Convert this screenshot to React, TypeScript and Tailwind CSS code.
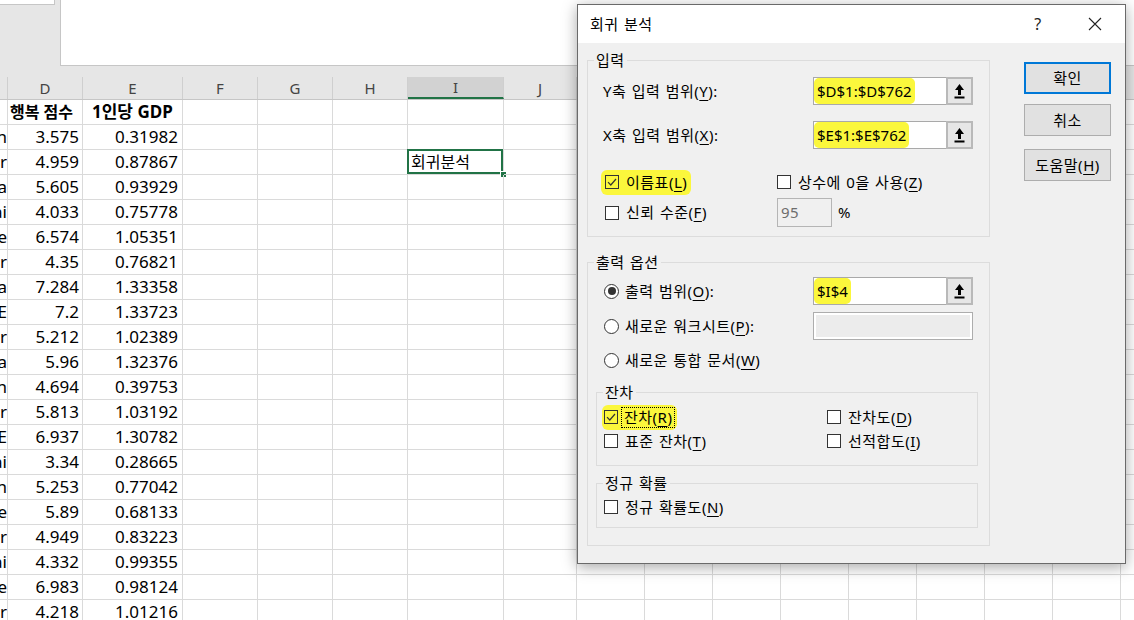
import React from 'react'

const KR = "font-['Noto_Sans','Noto_Sans_CJK_KR',sans-serif]"

const rows = [
  { c: 'n', d: '3.575', e: '0.31982' },
  { c: 'ar', d: '4.959', e: '0.87867' },
  { c: 'Ea', d: '5.605', e: '0.93929' },
  { c: 'ai', d: '4.033', e: '0.75778' },
  { c: 'ne', d: '6.574', e: '1.05351' },
  { c: 'ar', d: '4.35', e: '0.76821' },
  { c: 'a', d: '7.284', e: '1.33358' },
  { c: 'E', d: '7.2', e: '1.33723' },
  { c: 'ar', d: '5.212', e: '1.02389' },
  { c: 'Ea', d: '5.96', e: '1.32376' },
  { c: 'n', d: '4.694', e: '0.39753' },
  { c: 'ar', d: '5.813', e: '1.03192' },
  { c: 'E', d: '6.937', e: '1.30782' },
  { c: 'ai', d: '3.34', e: '0.28665' },
  { c: 'n', d: '5.253', e: '0.77042' },
  { c: 'ne', d: '5.89', e: '0.68133' },
  { c: 'ar', d: '4.949', e: '0.83223' },
  { c: 'ai', d: '4.332', e: '0.99355' },
  { c: 'ne', d: '6.983', e: '0.98124' },
  { c: 'ar', d: '4.218', e: '1.01216' },
]

const cols = [
  { key: 'C', label: '', w: 'w-[8px]' },
  { key: 'D', label: 'D', w: 'w-[75px]' },
  { key: 'E', label: 'E', w: 'w-[100px]' },
  { key: 'F', label: 'F', w: 'w-[75px]' },
  { key: 'G', label: 'G', w: 'w-[75px]' },
  { key: 'H', label: 'H', w: 'w-[75px]' },
  { key: 'I', label: 'I', w: 'w-[96px]' },
  { key: 'J', label: 'J', w: 'w-[73px]' },
  { key: 'K', label: 'K', w: 'w-[68px]' },
  { key: 'L', label: 'L', w: 'w-[68px]' },
  { key: 'M', label: 'M', w: 'w-[68px]' },
  { key: 'N', label: 'N', w: 'w-[68px]' },
  { key: 'O', label: 'O', w: 'w-[68px]' },
  { key: 'P', label: 'P', w: 'w-[68px]' },
  { key: 'Q', label: 'Q', w: 'w-[68px]' },
  { key: 'R', label: 'R', w: 'w-[68px]' },
  { key: 'S', label: '', w: 'w-[68px]' },
]

function Mn({ children }: { children: React.ReactNode }) {
  return <span className="underline decoration-1 underline-offset-[3px]">{children}</span>
}

function Check({ checked, clear }: { checked?: boolean; clear?: boolean }) {
  return (
    <span className={`w-[14px] h-[14px] border border-[#333] flex items-center justify-center shrink-0 ${clear ? 'bg-transparent' : 'bg-white'}`}>
      {checked && (
        <svg width="12" height="12" viewBox="0 0 12 12">
          <path d="M2 6.2 L4.8 9 L10 3" fill="none" stroke="#333" strokeWidth="1.2" />
        </svg>
      )}
    </span>
  )
}

function Radio({ on }: { on?: boolean }) {
  return (
    <span className="w-[15px] h-[15px] rounded-full border border-[#333] bg-white flex items-center justify-center shrink-0">
      {on && <span className="w-[8px] h-[8px] rounded-full bg-[#333]" />}
    </span>
  )
}

function RefButton() {
  return (
    <div className="w-[27px] h-[28px] border-2 border-[#b9b9b9] bg-[#e6e6e6] flex items-center justify-center shrink-0">
      <svg width="11" height="17" viewBox="0 0 11 17">
        <path d="M5.5 1 L10 7 H7 V12 H4 V7 H1 Z" fill="#000" />
        <rect x="0.5" y="13.5" width="10" height="2" fill="#000" />
      </svg>
    </div>
  )
}

function RangeInput({ value }: { value: string }) {
  return (
    <div className="flex">
      <div className="w-[133px] h-[28px] bg-white border border-[#a9a9a9] border-r-0 flex items-stretch tracking-normal">
        <span className="bg-[#fbf73c] rounded-[5px] px-[3px] flex items-center leading-none">{value}</span>
      </div>
      <RefButton />
    </div>
  )
}

function Spreadsheet() {
  return (
    <div className={`flex flex-col ${KR}`}>
      {/* formula bar area */}
      <div className="flex h-[66px]">
        <div className="w-[60px] bg-[#e6e6e6]">
          <div className="w-[55px] h-[5px] bg-white border-r border-b border-[#c6c6c6]" />
        </div>
        <div className="flex-1 bg-white border-l border-b border-[#c6c6c6]" />
      </div>
      <div className="h-[11px] bg-[#e6e6e6]" />
      {/* column headers */}
      <div className="flex h-[23px] bg-[#e6e6e6] border-b border-[#c6c6c6]">
        {cols.map(col => (
          <div
            key={col.key}
            className={`${col.w} shrink-0 border-r border-[#cfcfcf] flex items-center justify-center text-[15px] text-[#444] ${col.key === 'I' ? 'bg-[#d2d2d2] border-b-2 border-b-[#217346]' : ''}`}
          >
            {col.label}
          </div>
        ))}
      </div>
      {/* title row */}
      <div className="flex h-[25px]">
        {cols.map(col => (
          <div key={col.key} className={`${col.w} shrink-0 border-r border-b border-[#dadada] flex items-center font-bold text-black`}>
            {col.key === 'D' && <span className="pl-[2px] whitespace-nowrap text-[16px]">행복 점수</span>}
            {col.key === 'E' && <span className="pl-[9px] whitespace-nowrap text-[17px]">1인당 GDP</span>}
          </div>
        ))}
      </div>
      {rows.map((r, i) => (
        <div key={i} className="flex h-[25px]">
          {cols.map(col => (
            <div key={col.key} className={`${col.w} shrink-0 border-r border-b border-[#dadada] flex items-center text-[17px] text-black relative`}>
              {col.key === 'C' && <span className="w-full overflow-hidden flex justify-end whitespace-nowrap">{r.c}</span>}
              {col.key === 'D' && <span className="w-full text-right pr-[3px]">{r.d}</span>}
              {col.key === 'E' && <span className="w-full text-right pr-[4px]">{r.e}</span>}
              {col.key === 'I' && i === 1 && (
                <>
                  <span className="pl-[3px] whitespace-nowrap text-[16px]">회귀분석</span>
                  <span className="absolute -left-[1px] -top-[1px] right-0 bottom-0 border-2 border-[#217346]" />
                  <span className="absolute -right-[4px] -bottom-[4px] w-[7px] h-[7px] bg-[#217346] border border-white" />
                </>
              )}
            </div>
          ))}
        </div>
      ))}
    </div>
  )
}

function Dialog() {
  return (
    <div className={`absolute left-[577px] top-[4px] w-[549px] h-[560px] border border-[#6a6a6a] bg-[#f0f0f0] shadow-[0_3px_14px_rgba(0,0,0,0.35)] flex flex-col text-[15px] tracking-[0.5px] [word-spacing:1px] text-black ${KR}`}>
      <div className="h-[38px] bg-white flex items-center pl-[12px] shrink-0">
        <span>회귀 분석</span>
        <div className="ml-auto flex items-center">
          <span className="w-[30px] text-center text-[16px] text-[#222]">?</span>
          <span className="w-[46px] ml-[19px] flex justify-center">
            <svg width="14" height="14" viewBox="0 0 14 14">
              <path d="M1 1 L13 13 M13 1 L1 13" stroke="#222" strokeWidth="1.1" />
            </svg>
          </span>
          <span className="w-[7px]" />
        </div>
      </div>
      <div className="flex flex-1 pl-[9px] pt-[7px]">
        <div className="w-[403px] flex flex-col">
          {/* 입력 */}
          <fieldset className="border border-[#dcdcdc] h-[187px] p-0 m-0">
            <legend className="ml-[6px] px-[2px] leading-[20px]">입력</legend>
            <div className="pl-[15px] flex flex-col">
              <div className="flex items-center h-[28px] mt-[7px]">
                <span className="w-[210px]">Y축 입력 범위(<Mn>Y</Mn>):</span>
                <RangeInput value="$D$1:$D$762" />
              </div>
              <div className="flex items-center h-[28px] mt-[16px]">
                <span className="w-[210px]">X축 입력 범위(<Mn>X</Mn>):</span>
                <RangeInput value="$E$1:$E$762" />
              </div>
              <div className="flex items-center h-[20px] mt-[23px] -ml-[2px]">
                <div className="w-[176px] flex">
                  <span className="inline-flex items-center gap-[7px] px-[4px] h-[25px] bg-[#fbf73c] rounded-[6px]">
                    <Check checked clear />
                    <span>이름표(<Mn>L</Mn>)</span>
                  </span>
                </div>
                <span className="inline-flex items-center gap-[7px]">
                  <Check />
                  <span>상수에 0을 사용(<Mn>Z</Mn>)</span>
                </span>
              </div>
              <div className="flex items-center h-[29px] mt-[6px] -ml-[2px]">
                <div className="w-[176px] flex">
                  <span className="inline-flex items-center gap-[7px] px-[4px]">
                    <Check />
                    <span>신뢰 수준(<Mn>F</Mn>)</span>
                  </span>
                </div>
                <div className="w-[55px] h-[29px] border border-[#b5b5b5] bg-[#f0f0f0] flex items-center pl-[3px] text-[#6d6d6d]">95</div>
                <span className="ml-[6px]">%</span>
              </div>
            </div>
          </fieldset>

          {/* 출력 옵션 */}
          <fieldset className="border border-[#dcdcdc] h-[294px] mt-[15px] p-0 m-0">
            <legend className="ml-[6px] px-[2px] leading-[20px]">출력 옵션</legend>
            <div className="pl-[15px] flex flex-col">
              <div className="flex items-center h-[28px] mt-[5px]">
                <span className="w-[210px] flex items-center gap-[6px] pl-[1px]">
                  <Radio on />
                  <span>출력 범위(<Mn>O</Mn>):</span>
                </span>
                <RangeInput value="$I$4" />
              </div>
              <div className="flex items-center h-[28px] mt-[7px]">
                <span className="w-[210px] flex items-center gap-[6px] pl-[1px]">
                  <Radio />
                  <span>새로운 워크시트(<Mn>P</Mn>):</span>
                </span>
                <div className="w-[160px] h-[28px] border border-[#adadad] bg-white p-[2px]">
                  <div className="w-full h-full bg-[#ececec]" />
                </div>
              </div>
              <div className="flex items-center h-[20px] mt-[10px]">
                <span className="flex items-center gap-[6px] pl-[1px]">
                  <Radio />
                  <span>새로운 통합 문서(<Mn>W</Mn>)</span>
                </span>
              </div>
            </div>
            <div className="pl-[8px] flex flex-col">
              {/* 잔차 */}
              <fieldset className="border border-[#dcdcdc] w-[382px] h-[84px] mt-[12px] p-0 m-0">
                <legend className="ml-[6px] px-[2px] leading-[20px]">잔차</legend>
                <div className="pl-[7px] flex flex-col">
                  <div className="flex items-center h-[24px] mt-[3px]">
                    <div className="w-[223px] flex">
                      <span className="inline-flex items-center gap-[3px] -ml-[2px] pl-[2px] pr-[2px] h-[25px] bg-[#fbf73c] rounded-[6px]">
                        <Check checked clear />
                        <span className="border border-dotted border-black px-[2px] leading-[19px]">잔차(<Mn>R</Mn>)</span>
                      </span>
                    </div>
                    <span className="inline-flex items-center gap-[7px]">
                      <Check />
                      <span>잔차도(<Mn>D</Mn>)</span>
                    </span>
                  </div>
                  <div className="flex items-center h-[20px] mt-[2px]">
                    <div className="w-[223px] flex">
                      <span className="inline-flex items-center gap-[7px]">
                        <Check />
                        <span>표준 잔차(<Mn>T</Mn>)</span>
                      </span>
                    </div>
                    <span className="inline-flex items-center gap-[7px]">
                      <Check />
                      <span>선적합도(<Mn>I</Mn>)</span>
                    </span>
                  </div>
                </div>
              </fieldset>
              {/* 정규 확률 */}
              <fieldset className="border border-[#dcdcdc] w-[382px] h-[55px] mt-[7px] p-0 m-0">
                <legend className="ml-[6px] px-[2px] leading-[20px]">정규 확률</legend>
                <div className="pl-[7px] flex flex-col">
                  <div className="flex items-center h-[20px] mt-[4px]">
                    <span className="inline-flex items-center gap-[7px]">
                      <Check />
                      <span>정규 확률도(<Mn>N</Mn>)</span>
                    </span>
                  </div>
                </div>
              </fieldset>
            </div>
          </fieldset>
        </div>

        {/* buttons */}
        <div className="ml-[34px] pt-[12px] flex flex-col">
          <button className="w-[87px] h-[32px] border-2 border-[#0078d7] bg-[#e1e1e1] flex items-center justify-center">확인</button>
          <button className="w-[87px] h-[32px] mt-[10px] border border-[#adadad] bg-[#e1e1e1] flex items-center justify-center">취소</button>
          <button className="w-[87px] h-[32px] mt-[13px] border border-[#adadad] bg-[#e1e1e1] flex items-center justify-center">
            도움말(<Mn>H</Mn>)
          </button>
        </div>
      </div>
    </div>
  )
}

export default function App() {
  return (
    <div className="relative w-[1134px] h-[620px] overflow-hidden bg-white">
      <Spreadsheet />
      <Dialog />
    </div>
  )
}
